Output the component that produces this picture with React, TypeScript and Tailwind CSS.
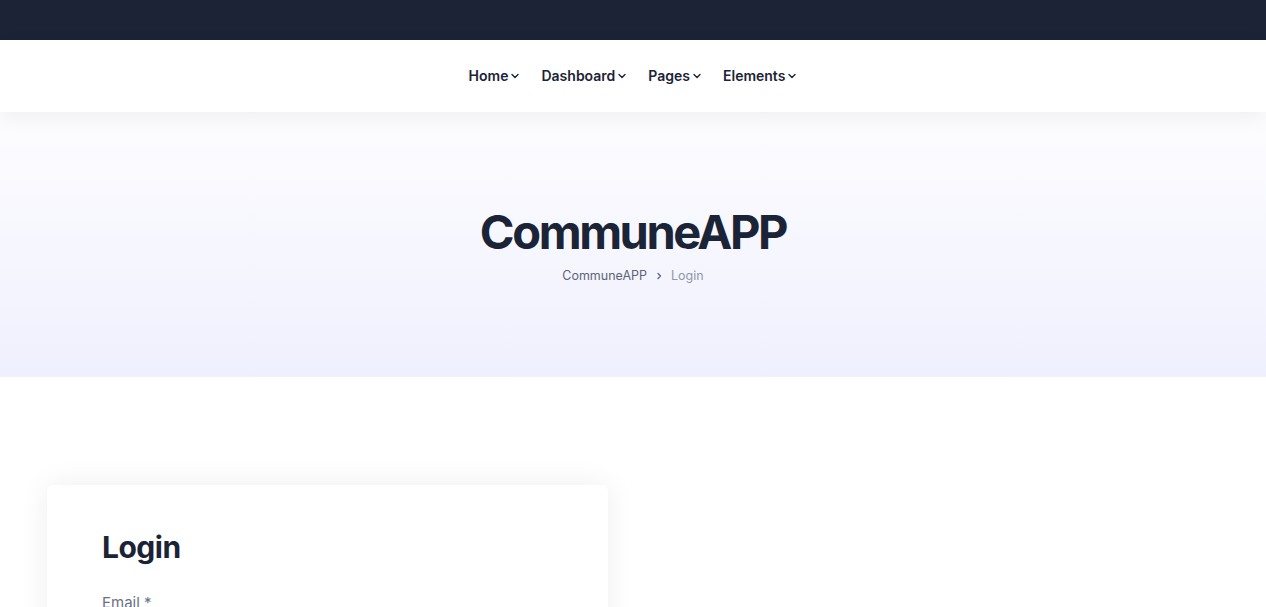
import React from "react";

function Chevron() {
  return (
    <svg width="10" height="10" viewBox="0 0 10 10" className="ml-[2px] mt-[1px]" fill="none" stroke="#1b2336" strokeWidth="1.4" strokeLinecap="round" strokeLinejoin="round">
      <path d="M2 3.5 L5 6.5 L8 3.5" />
    </svg>
  );
}

export default function App() {
  const items = ["Home", "Dashboard", "Pages", "Elements"];
  return (
    <div className="min-h-[607px] bg-white" style={{ fontFamily: "Inter, 'Noto Sans', sans-serif" }}>
      <div className="h-[40px] bg-[#1c2337]" />
      <nav className="relative z-10 flex h-[72px] items-center justify-center gap-[21px] bg-white pb-[2px] shadow-[0_6px_20px_rgba(0,0,0,0.06)]">
        {items.map((it) => (
          <div key={it} className="flex items-center text-[14px] font-semibold text-[#1b2336]">
            <span>{it}</span>
            <Chevron />
          </div>
        ))}
      </nav>
      <section className="flex h-[265px] flex-col items-center bg-gradient-to-b from-[#fdfdff] to-[#eff0fd] pt-[96px]">
        <h1 className="text-[47px] font-bold leading-none tracking-[-2.4px] text-[#1b2336]">CommuneAPP</h1>
        <div className="mt-[12px] flex items-center gap-[8px] text-[12.5px] text-[#5d6478]">
          <span>CommuneAPP</span>
          <svg width="8" height="8" viewBox="0 0 8 8" fill="none" stroke="#5d6478" strokeWidth="1.3" strokeLinecap="round" strokeLinejoin="round">
            <path d="M3 1.5 L5.5 4 L3 6.5" />
          </svg>
          <span className="text-[#9197aa]">Login</span>
        </div>
      </section>
      <div className="px-[47px] pt-[108px]">
        <div className="h-[200px] w-[561px] rounded-[6px] bg-white px-[55px] pt-[47px] shadow-[0_0_30px_rgba(0,0,0,0.07)]">
          <h2 className="text-[30px] font-bold leading-none tracking-[-0.5px] text-[#1b2336]">Login</h2>
          <div className="mt-[30px] text-[15px] text-[#6b7185]">Email *</div>
        </div>
      </div>
    </div>
  );
}
